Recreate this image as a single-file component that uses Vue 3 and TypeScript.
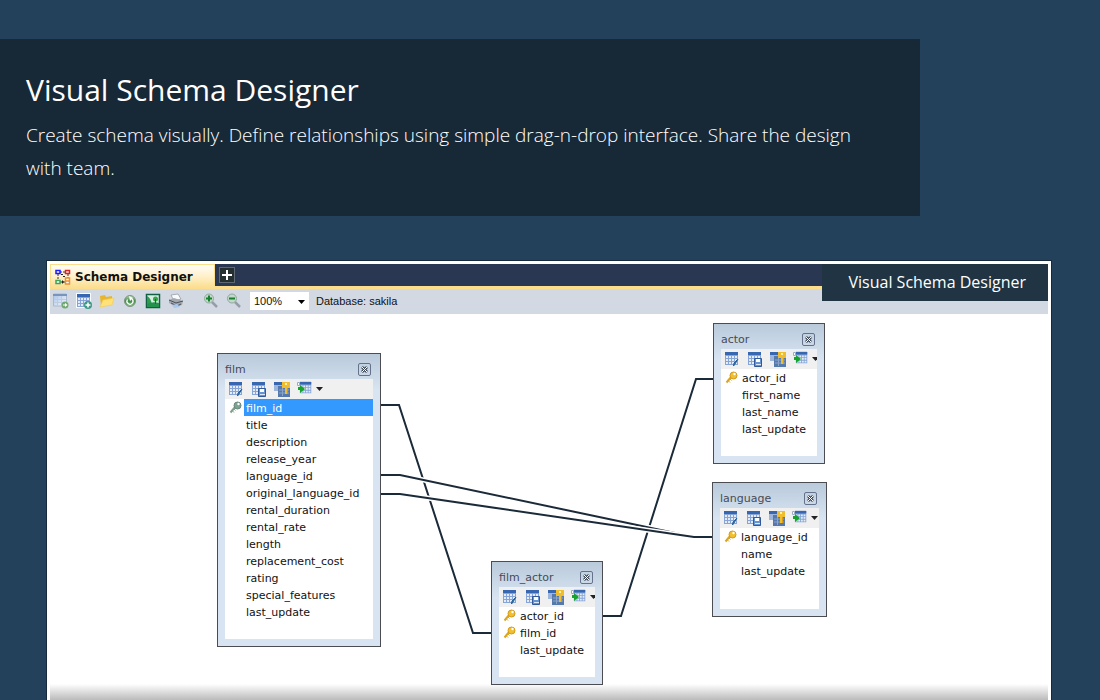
<script setup lang="ts">
interface Column {
  name: string
  key?: boolean
}
interface Entity {
  name: string
  x: number
  y: number
  w: number
  h: number
  selected?: string
  columns: Column[]
}

const cols = (keys: string[], rest: string[]): Column[] => [
  ...keys.map((name) => ({ name, key: true })),
  ...rest.map((name) => ({ name })),
]

const entities: Entity[] = [
  {
    name: 'film', x: 167, y: 39, w: 164, h: 294, selected: 'film_id',
    columns: cols(['film_id'], [
      'title', 'description', 'release_year', 'language_id', 'original_language_id',
      'rental_duration', 'rental_rate', 'length', 'replacement_cost', 'rating',
      'special_features', 'last_update',
    ]),
  },
  { name: 'actor', x: 663, y: 9, w: 112, h: 141, columns: cols(['actor_id'], ['first_name', 'last_name', 'last_update']) },
  { name: 'language', x: 662, y: 168, w: 115, h: 135, columns: cols(['language_id'], ['name', 'last_update']) },
  { name: 'film_actor', x: 441, y: 247, w: 112, h: 124, columns: cols(['actor_id', 'film_id'], ['last_update']) },
]

const wires: string[] = [
  '331,91 349,91 423,319 441,319',
  '663,65 646,65 571,302 553,302',
  '331,161 350,161 644,223 662,223',
  '331,180 350,180 644,223 662,223',
]
</script>

<template>
  <main class="page">
    <header class="intro">
      <h1>Visual Schema Designer</h1>
      <p>Create schema visually. Define relationships using simple drag-n-drop interface. Share the design with team.</p>
    </header>

    <section class="frame">
      <svg class="defs" aria-hidden="true">
        <defs>
          <linearGradient id="sheet" x1="0" y1="0" x2="1" y2="1">
            <stop offset="0" stop-color="#a9c3e8" /><stop offset="1" stop-color="#f2f7fd" />
          </linearGradient>
          <linearGradient id="ball" x1="0" y1="0" x2="0" y2="1">
            <stop offset="0" stop-color="#b9d8b6" /><stop offset="0.5" stop-color="#3c8b43" /><stop offset="1" stop-color="#8fc88b" />
          </linearGradient>
          <symbol id="grid" viewBox="0 0 16 16">
            <path d="M1 1h13v13H1z" fill="#86a5d6" />
            <path d="M1 1h13v3H1z" fill="#3767b0" />
            <path d="M2 5h2v2H2zM5 5h2v2H5zM8 5h2v2H8zM11 5h2v2h-2zM2 8h2v2H2zM5 8h2v2H5zM8 8h2v2H8zM11 8h2v2h-2zM2 11h2v2H2zM5 11h2v2H5zM8 11h2v2H8zM11 11h2v2h-2z" fill="#e3ecf8" />
          </symbol>
        </defs>
      </svg>

      <div class="tabs">
        <button class="tab" type="button">
          <svg width="16" height="16" viewBox="0 0 16 16" fill="none" aria-hidden="true">
            <path d="M3 5v7M13 5v6M5 3h6M5 13h6" stroke="#333" stroke-dasharray="2 1" />
            <path d="M1 1.500h4v3H1z" stroke="#1a1aff" stroke-width="1.500" fill="#fff" />
            <path d="M10.500 1.500h4v3h-4z" stroke="#e02020" stroke-width="1.500" fill="#fff" />
            <path d="M1 11.500h4v3H1z" stroke="#3ba558" stroke-width="1.500" fill="#fff" />
            <path d="M10.500 9h4v6h-4zM10.500 12h4" stroke="#f09030" stroke-width="1.500" fill="#fff" />
            <path d="M6 5h2v1H6zM8 7h2v1H8zM7 11l2 2-2 2z" fill="#222" />
          </svg>
          <span>Schema Designer</span>
        </button>
        <button class="add" type="button" aria-label="New tab">
          <svg width="10" height="10" viewBox="0 0 10 10"><path d="M5 0v10M0 5h10" stroke="#fff" stroke-width="2" /></svg>
        </button>
      </div>

      <div class="toolbar">
        <button type="button" aria-label="New schema">
          <svg width="16" height="16" viewBox="0 0 16 16">
            <path d="M.5 1h13v12H.5z" fill="url(#sheet)" stroke="#a9b8cc" />
            <path d="M0 1h14v2H0z" fill="#7895bb" />
            <path d="M1 6.500h12M1 9.500h12M4.500 3v10M8.500 3v10" stroke="#bccbe0" />
            <circle cx="12" cy="12" r="3.500" fill="#72a973" />
            <path d="M10 12h3" stroke="#fff" /><path d="M12 10l2.500 2-2.500 2z" fill="#fff" />
          </svg>
        </button>
        <button type="button" aria-label="Add table">
          <svg width="16" height="16" viewBox="0 0 16 16">
            <path d="M0 0h15v15H0z" fill="#f7fafe" /><use href="#grid" width="16" height="16" />
            <circle cx="12" cy="12" r="4" fill="#3d9a87" />
            <path d="M12 9.500v5M9.500 12h5" stroke="#fff" stroke-width="1.500" />
          </svg>
        </button>
        <button type="button" aria-label="Open">
          <svg width="16" height="16" viewBox="0 0 16 16">
            <path d="M1 3l5-1 1 2 6-1v4L2 13z" fill="#e9b52c" />
            <path d="M1 14l3-7 11-2-2 7z" fill="#ffe177" stroke="#f2cb4d" stroke-width=".6" />
          </svg>
        </button>
        <button type="button" aria-label="Refresh">
          <svg width="16" height="16" viewBox="0 0 16 16">
            <circle cx="8" cy="8" r="5.500" fill="url(#ball)" stroke="#7d947d" />
            <path d="M5.500 6.500A3 3 0 1 0 10 6" stroke="#fff" stroke-width="1.300" fill="none" />
            <path d="M7 3l4 2-3 3z" fill="#fff" />
          </svg>
        </button>
        <button type="button" aria-label="Export image">
          <svg width="16" height="16" viewBox="0 0 16 16">
            <path d="M1.500 1.500h13v13h-13z" fill="#d5efe3" stroke="#126044" stroke-width="1.500" />
            <path d="M2 3q4 2 5 9H2z" fill="#2f9a50" />
            <path d="M2 11q6-3 12-1v4H2z" fill="#24914c" />
            <circle cx="10.500" cy="6" r="2.500" fill="#35a346" /><path d="M10.500 6v5" stroke="#27633a" />
          </svg>
        </button>
        <button type="button" aria-label="Print">
          <svg width="16" height="16" viewBox="0 0 16 16">
            <path d="M3 2l7-1 3 5-7 2z" fill="#f8fafc" stroke="#8b929c" stroke-width=".7" />
            <path d="M1 7l5-2 9 3-1 4-6 2-7-4z" fill="#a3a8b0" />
            <path d="M1 7l7 3 7-2M3 10l6 3 4-2" stroke="#4b5159" fill="none" />
            <path d="M4 12l5-1 3 3-6 1z" fill="#a7c7ee" />
          </svg>
        </button>
        <button class="spaced" type="button" aria-label="Zoom in">
          <svg width="16" height="16" viewBox="0 0 16 16">
            <path d="M9 9l5 5" stroke="#959da6" stroke-width="2.500" />
            <circle cx="6" cy="5.500" r="4.500" fill="#c1d8ca" stroke="#8fa89b" />
            <path d="M6 2.500v6M3 5.500h6" stroke="#16802d" stroke-width="2" />
          </svg>
        </button>
        <button type="button" aria-label="Zoom out">
          <svg width="16" height="16" viewBox="0 0 16 16">
            <path d="M9 9l5 5" stroke="#959da6" stroke-width="2.500" />
            <circle cx="6" cy="5.500" r="4.500" fill="#c1d8ca" stroke="#8fa89b" />
            <path d="M3 5.500h6" stroke="#16802d" stroke-width="2" />
          </svg>
        </button>
        <span class="zoom">
          <select aria-label="Zoom level"><option>100%</option></select>
          <svg width="7" height="4" viewBox="0 0 7 4" aria-hidden="true"><path d="M0 0h7L3.500 4z" /></svg>
        </span>
        <span class="database">Database: sakila</span>
      </div>

      <h2 class="caption">Visual Schema Designer</h2>

      <div class="canvas">
        <svg class="wires" aria-hidden="true">
          <g v-for="w in wires" :key="w" fill="none">
            <polyline :points="w" stroke="#fff" stroke-width="5" />
            <polyline :points="w" stroke="#1b2a39" stroke-width="2" />
          </g>
        </svg>

        <article
          v-for="e in entities"
          :key="e.name"
          class="entity"
          :style="{ left: e.x + 'px', top: e.y + 'px', width: e.w + 'px', height: e.h + 'px' }"
        >
          <div class="head">
            <h3>{{ e.name }}</h3>
            <button type="button" :aria-label="'Close ' + e.name">
              <svg width="7" height="7" viewBox="0 0 7 7"><path d="M1 1l5 5M6 1L1 6" stroke="#3c4656" stroke-width="2.600" /><path d="M1 1l5 5M6 1L1 6" stroke="#fff" stroke-width="1" /></svg>
            </button>
          </div>
          <div class="tools">
            <button type="button" aria-label="Edit table">
              <svg width="16" height="16" viewBox="0 0 16 16"><use href="#grid" width="16" height="16" /><path d="M14 8l-3 5-1.500 2 .5-3z" fill="#3278bd" stroke="#286098" /></svg>
            </button>
            <button type="button" aria-label="Save table">
              <svg width="16" height="16" viewBox="0 0 16 16"><use href="#grid" width="16" height="16" /><path d="M7.500 7.500h7v8h-7z" fill="#6494d2" stroke="#315999" /><path d="M9 8h4v3H9z" fill="#fff" /><path d="M9 13h5v1H9z" fill="#dce8f7" /></svg>
            </button>
            <button type="button" aria-label="Manage keys">
              <svg width="16" height="16" viewBox="0 0 16 16"><path d="M0 1h9v9H0z" fill="#9db5da" /><path d="M0 1h9v3H0z" fill="#3767b0" /><path d="M4 5h12v11H4z" fill="#5679ac" /><path d="M5 9h10M5 12h10M8.500 6v9" stroke="#8ba5ca" /><path d="M8 1h8v6h-2v6h-3V7H8z" fill="#f0bd2e" /><path d="M11 2h2v2h-2z" fill="#fff2ad" /><path d="M13.500 7v6" stroke="#d59c17" /></svg>
            </button>
            <button type="button" aria-label="Relationships">
              <svg width="16" height="16" viewBox="0 0 16 16"><use href="#grid" x="2" y="0" width="14" height="14" /><path d="M.5 1.500h2v3h-2z" fill="#fff" stroke="#9baac0" /><path d="M1 6h2V4l5 4-5 4V9H1z" fill="#16a32b" /></svg>
            </button>
            <svg class="more" width="7" height="4" viewBox="0 0 7 4" aria-hidden="true"><path d="M0 0h7L3.500 4z" fill="#222" /></svg>
          </div>
          <ul>
            <li v-for="c in e.columns" :key="c.name" :class="{ picked: c.name === e.selected }">
              <span class="mark">
                <svg v-if="c.key" class="key" width="13" height="13" viewBox="0 0 13 13" aria-hidden="true">
                  <path class="shaft" d="M6.500 5.500L1.500 11.500" />
                  <path class="shaft teeth" d="M3 9.500l2 2M4.500 7.500l2 2" />
                  <circle class="bow" cx="8.500" cy="4.500" r="3.500" />
                  <circle cx="9.500" cy="3" r="1.200" fill="#fff" />
                </svg>
              </span>
              <span class="label">{{ c.name }}</span>
            </li>
          </ul>
        </article>
      </div>
    </section>
  </main>
</template>

<style>
body {
  margin: 0;
  background: #24415b;
}
</style>

<style scoped>
.page {
  display: flex;
  flex-direction: column;
  box-sizing: border-box;
  min-height: 100vh;
  padding-top: 39px;
  background: #24415b;
  font-family: "Noto Sans", "Open Sans", sans-serif;
}
h1, h2, h3, p, ul {
  margin: 0;
  padding: 0;
  font-weight: 400;
}
button {
  display: flex;
  align-items: center;
  justify-content: center;
  padding: 0;
  border: 0;
  background: none;
}
.intro {
  box-sizing: border-box;
  width: 920px;
  max-width: 84%;
  padding: 28px 68px 31px 26px;
  background: #172836;
  color: #fff;
  font-family: "Open Sans", "Noto Sans", sans-serif;
}
.intro h1 {
  font-size: 30px;
  line-height: 46px;
}
.intro p {
  padding-top: 6px;
  font-size: 19px;
  line-height: 33px;
  font-weight: 300;
}
.frame {
  position: relative;
  display: flex;
  flex: 1;
  flex-direction: column;
  margin: 44px 48px 0 46px;
  padding: 3px 3px 0;
  border: 1px solid #17293c;
  border-bottom: 0;
  background: #fff;
}
.defs {
  position: absolute;
  width: 0;
  height: 0;
}
.tabs {
  display: flex;
  align-items: center;
  height: 22px;
  border-bottom: 3px solid #fbdd8c;
  background: #2a3753;
}
.tab {
  align-self: flex-start;
  box-sizing: border-box;
  justify-content: flex-start;
  gap: 4px;
  width: 165px;
  height: 25px;
  margin-bottom: -3px;
  padding-left: 4px;
  border: 1px solid #fbdd8c;
  background: linear-gradient(#fffdf7, #fff0ca 50%, #fbdd8c);
  color: #111;
  font: bold 12px "DejaVu Sans", sans-serif;
}
.add {
  box-sizing: border-box;
  width: 16px;
  height: 16px;
  margin-left: 4px;
  border: 1px solid #606874;
  background: #24302f;
}
.toolbar {
  display: flex;
  align-items: center;
  gap: 7px;
  box-sizing: border-box;
  height: 25px;
  padding: 0 0 2px 3px;
  background: #d2d9e3;
  font: 11px "Liberation Sans", sans-serif;
}
.spaced {
  margin-left: 12px;
}
.zoom {
  position: relative;
  display: flex;
  margin-left: 1px;
}
.zoom select {
  width: 59px;
  height: 18px;
  padding: 0 4px;
  border: 0;
  appearance: none;
  background: #fff;
  color: #111;
  font: inherit;
}
.zoom svg {
  position: absolute;
  right: 4px;
  top: 8px;
  pointer-events: none;
}
.database {
  color: #111;
}
.caption {
  position: absolute;
  top: 3px;
  right: 3px;
  padding: 0 22px 0 27px;
  background: #213443;
  color: #fff;
  font: 16px/37px "Open Sans", sans-serif;
}
.canvas {
  position: relative;
  flex: 1;
  min-height: 386px;
  background: linear-gradient(transparent calc(100% - 16px), #bbb) #fff;
}
.wires {
  position: absolute;
  width: 100%;
  height: 100%;
}
.entity {
  position: absolute;
  display: flex;
  flex-direction: column;
  box-sizing: border-box;
  padding: 0 7px 7px;
  border: 1px solid #4c4d52;
  background: linear-gradient(#b9cadb, #d8e4f1 36px);
}
.head {
  display: flex;
  align-items: center;
  justify-content: space-between;
  box-sizing: border-box;
  height: 25px;
  padding: 6px 2px 0 0;
}
.head h3 {
  color: #454b58;
  font: 11px/17px "DejaVu Sans", sans-serif;
}
.head button {
  box-sizing: border-box;
  width: 13px;
  height: 13px;
  border: 1px solid #66718c;
  border-radius: 2px;
}
.tools {
  display: flex;
  align-items: center;
  gap: 7px;
  height: 20px;
  padding-left: 3px;
  overflow: hidden;
  background: #f0f0f0;
}
.tools svg {
  flex: none;
}
.more {
  margin-left: -4px;
}
ul {
  flex: 1;
  background: #fff;
  list-style: none;
}
li {
  display: flex;
  height: 17px;
  color: #111;
  font: 11px/19px "DejaVu Sans", sans-serif;
}
.mark {
  display: flex;
  align-items: center;
  box-sizing: border-box;
  width: 19px;
  padding-left: 4px;
}
.label {
  flex: 1;
  padding-left: 2px;
  white-space: nowrap;
}
.picked .label {
  background: #3399ff;
  color: #fff;
}
.shaft {
  fill: none;
  stroke: #dca51e;
  stroke-width: 2;
}
.teeth {
  stroke-width: 1;
}
.bow {
  fill: #f0c030;
  stroke: #d39a18;
  stroke-width: 1;
}
.picked .shaft {
  stroke: #83a08c;
}
.picked .bow {
  fill: #7fa393;
  stroke: #67897c;
}
</style>
